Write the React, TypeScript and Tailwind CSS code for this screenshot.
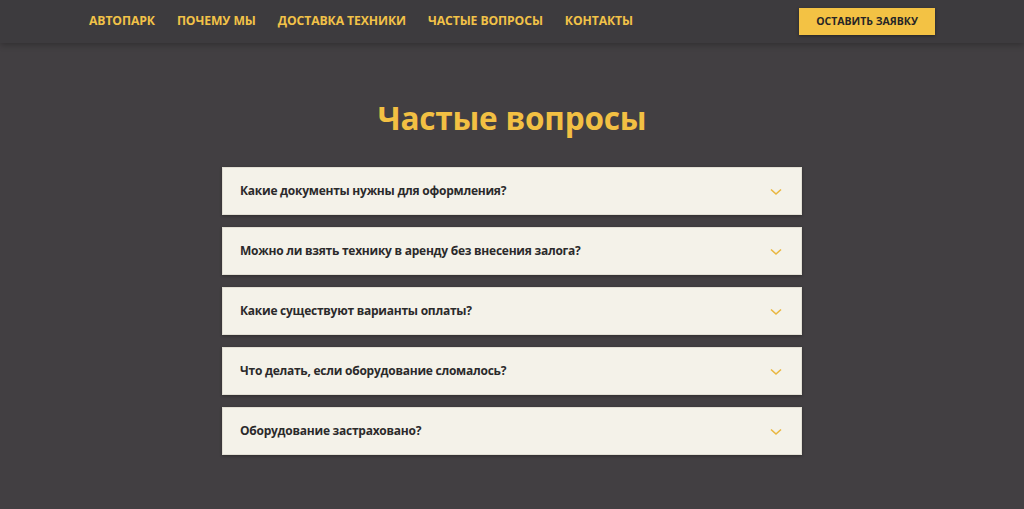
import { useState } from 'react';

const navItems = ['Автопарк', 'Почему мы', 'Доставка техники', 'Частые вопросы', 'Контакты'];

const faq = [
  'Какие документы нужны для оформления?',
  'Можно ли взять технику в аренду без внесения залога?',
  'Какие существуют варианты оплаты?',
  'Что делать, если оборудование сломалось?',
  'Оборудование застраховано?',
];

function Chevron() {
  return (
    <svg width="12" height="8" viewBox="0 0 12 8" fill="none" className="shrink-0 mt-[2px]">
      <path d="M1 1.5l5 4.5 5-4.5" stroke="#e9b740" strokeWidth="1.6" />
    </svg>
  );
}

export default function App() {
  const [open, setOpen] = useState<number | null>(null);

  return (
    <div className="min-h-[509px] bg-[#423f42] font-['Open_Sans',sans-serif]">
      <header className="h-[43px] bg-[#3d3b3e] shadow-[0_2px_6px_rgba(0,0,0,0.25)] flex items-center justify-between pl-[89px] pr-[89px]">
        <nav className="flex items-center gap-[22px]">
          {navItems.map(item => (
            <a key={item} href="#" className="text-[12.2px] font-bold uppercase text-[#f2c248] tracking-[-0.1px]">
              {item}
            </a>
          ))}
        </nav>
        <button className="h-[27px] w-[136px] bg-[#f3c244] text-[#262527] text-[10.5px] font-bold uppercase shadow-[0_1px_3px_rgba(0,0,0,0.4)]">
          Оставить заявку
        </button>
      </header>

      <section className="flex flex-col items-center pt-[51px] pb-[54px]">
        <h2 className="text-[31.5px] leading-[48px] font-bold text-[#f2c043] tracking-[-0.2px]">Частые вопросы</h2>
        <div className="mt-[25px] w-[580px] flex flex-col gap-[12px]">
          {faq.map((q, i) => (
            <div key={q} className="bg-[#f4f2e9] border border-[#e2dfd4] shadow-[0_1px_3px_rgba(0,0,0,0.3)]">
              <button
                onClick={() => setOpen(open === i ? null : i)}
                className="w-full h-[46px] flex items-center justify-between pl-[17px] pr-[19px] text-left"
              >
                <span className="text-[12px] font-bold text-[#2b2a2b] tracking-[-0.25px]">{q}</span>
                <Chevron />
              </button>
            </div>
          ))}
        </div>
      </section>
    </div>
  );
}
